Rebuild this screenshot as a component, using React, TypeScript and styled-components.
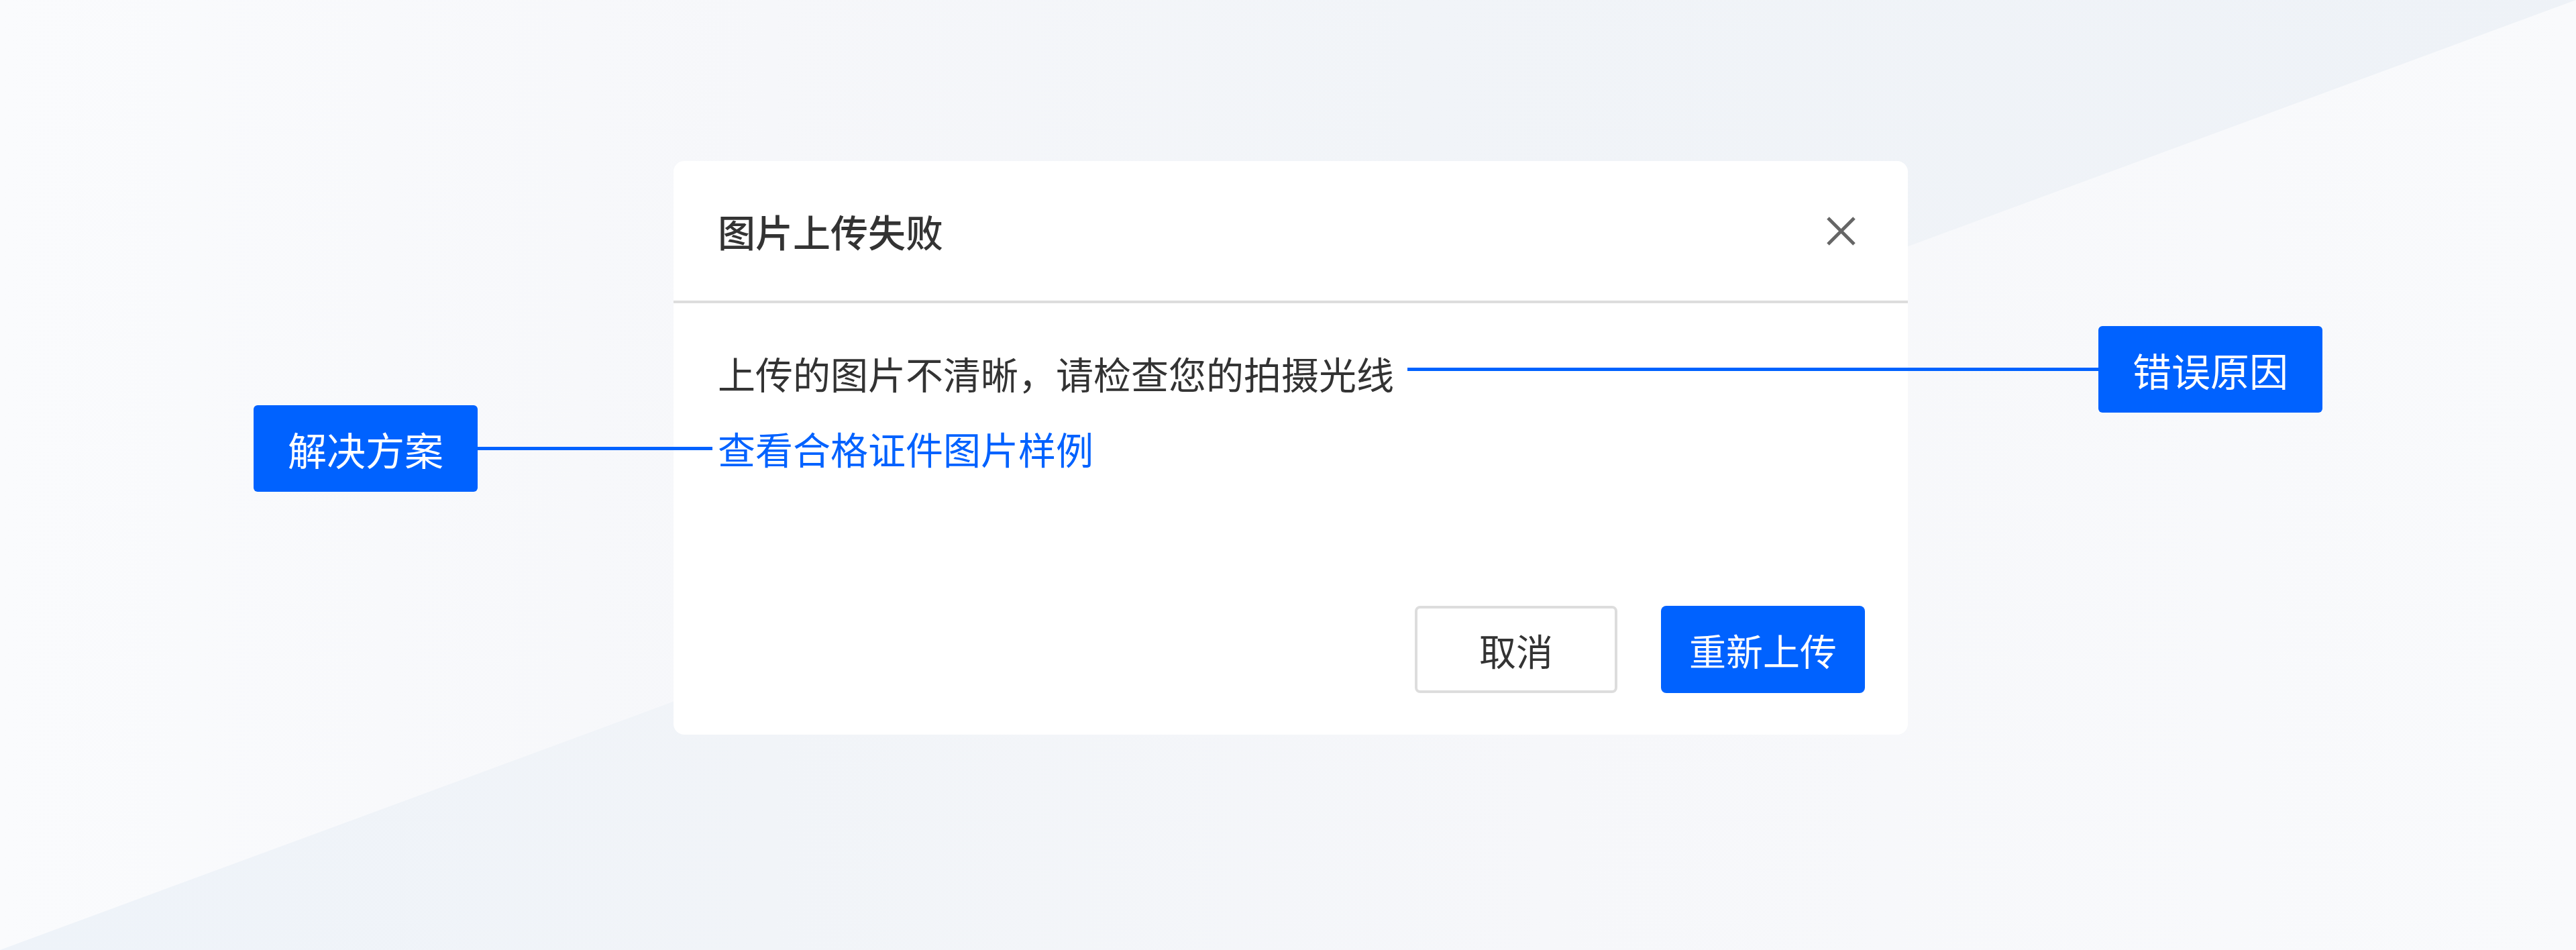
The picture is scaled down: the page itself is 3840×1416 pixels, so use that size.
import styled, { createGlobalStyle } from 'styled-components';

const GlobalStyle = createGlobalStyle`
    html, body {
        margin: 0;
        padding: 0;
    }
    body {
        font-family: 'Noto Sans CJK SC', 'Noto Sans', sans-serif;
        color: #333333;
    }
`;

const BLUE = '#0062ff';

const Page = styled.div`
    position: relative;
    width: 100%;
    height: 1416px;
    overflow: hidden;
    box-sizing: border-box;
    padding: 240px 0 0 8px;
    display: flex;
    justify-content: center;
    align-items: flex-start;
    background: linear-gradient(
        to right,
        #fafbfd 0%,
        #f6f7fa 30%,
        #f1f4f8 55%,
        #eef2f7 100%
    );

    &::before {
        content: '';
        position: absolute;
        inset: 0;
        clip-path: polygon(0 100%, 100% 0, 100% 100%);
        background: linear-gradient(
            to right,
            #eef3f9 0%,
            #f1f4f8 30%,
            #f6f7fa 60%,
            #f9fafc 100%
        );
    }
`;

const Dialog = styled.div`
    position: relative;
    z-index: 1;
    width: 1840px;
    background: #ffffff;
    border-radius: 16px;
    display: flex;
    flex-direction: column;
`;

const Header = styled.div`
    height: 208px;
    border-bottom: 4px solid #dddddd;
    display: flex;
    align-items: center;
    justify-content: space-between;
    padding: 0 77px 0 66px;
`;

const Title = styled.h2`
    margin: 0;
    font-size: 56px;
    font-weight: 500;
    color: #333333;
    line-height: 1;
`;

const CloseButton = styled.button`
    border: none;
    background: none;
    padding: 0;
    width: 45px;
    height: 45px;
    display: flex;
    cursor: pointer;
`;

const Body = styled.div`
    padding: 62px 66px 193px;
    display: flex;
    flex-direction: column;
    gap: 28px;
`;

const Line = styled.p<{ link?: boolean }>`
    margin: 0;
    font-size: 56px;
    line-height: 84px;
    color: ${(props) => (props.link ? BLUE : '#333333')};
    cursor: ${(props) => (props.link ? 'pointer' : 'default')};
`;

const Footer = styled.div`
    display: flex;
    justify-content: flex-end;
    gap: 65px;
    padding: 0 64px 62px;
`;

const Button = styled.button<{ primary?: boolean }>`
    height: 130px;
    width: ${(props) => (props.primary ? '304px' : '302px')};
    box-sizing: border-box;
    border-radius: 8px;
    font-family: inherit;
    font-size: 55px;
    cursor: pointer;
    border: ${(props) => (props.primary ? 'none' : '4px solid #dddddd')};
    background: ${(props) => (props.primary ? BLUE : '#ffffff')};
    color: ${(props) => (props.primary ? '#ffffff' : '#333333')};
`;

const Callout = styled.div<{ left: number; top: number }>`
    position: absolute;
    left: ${(props) => props.left}px;
    top: ${(props) => props.top}px;
    display: flex;
    align-items: center;
`;

const Connector = styled.div<{ length: number }>`
    width: ${(props) => props.length}px;
    height: 5px;
    background: ${BLUE};
`;

const Tag = styled.div`
    width: 334px;
    height: 129px;
    border-radius: 6px;
    background: ${BLUE};
    color: #ffffff;
    font-size: 58px;
    display: flex;
    align-items: center;
    justify-content: center;
`;

function CloseIcon() {
    return (
        <svg width='45' height='45' viewBox='0 0 45 45'>
            <path
                d='M3 3 L42 42 M42 3 L3 42'
                stroke='#666666'
                strokeWidth='5'
                fill='none'
            />
        </svg>
    );
}

function App() {
    return (
        <>
            <GlobalStyle />
            <Page>
                <Dialog>
                    <Header>
                        <Title>图片上传失败</Title>
                        <CloseButton aria-label='关闭'>
                            <CloseIcon />
                        </CloseButton>
                    </Header>
                    <Body>
                        <Line>上传的图片不清晰，请检查您的拍摄光线</Line>
                        <Line link>查看合格证件图片样例</Line>
                    </Body>
                    <Footer>
                        <Button>取消</Button>
                        <Button primary>重新上传</Button>
                    </Footer>

                    <Callout left={1094} top={246}>
                        <Connector length={1030} />
                        <Tag>错误原因</Tag>
                    </Callout>
                    <Callout left={-626} top={364}>
                        <Tag>解决方案</Tag>
                        <Connector length={350} />
                    </Callout>
                </Dialog>
            </Page>
        </>
    );
}

export default App;
